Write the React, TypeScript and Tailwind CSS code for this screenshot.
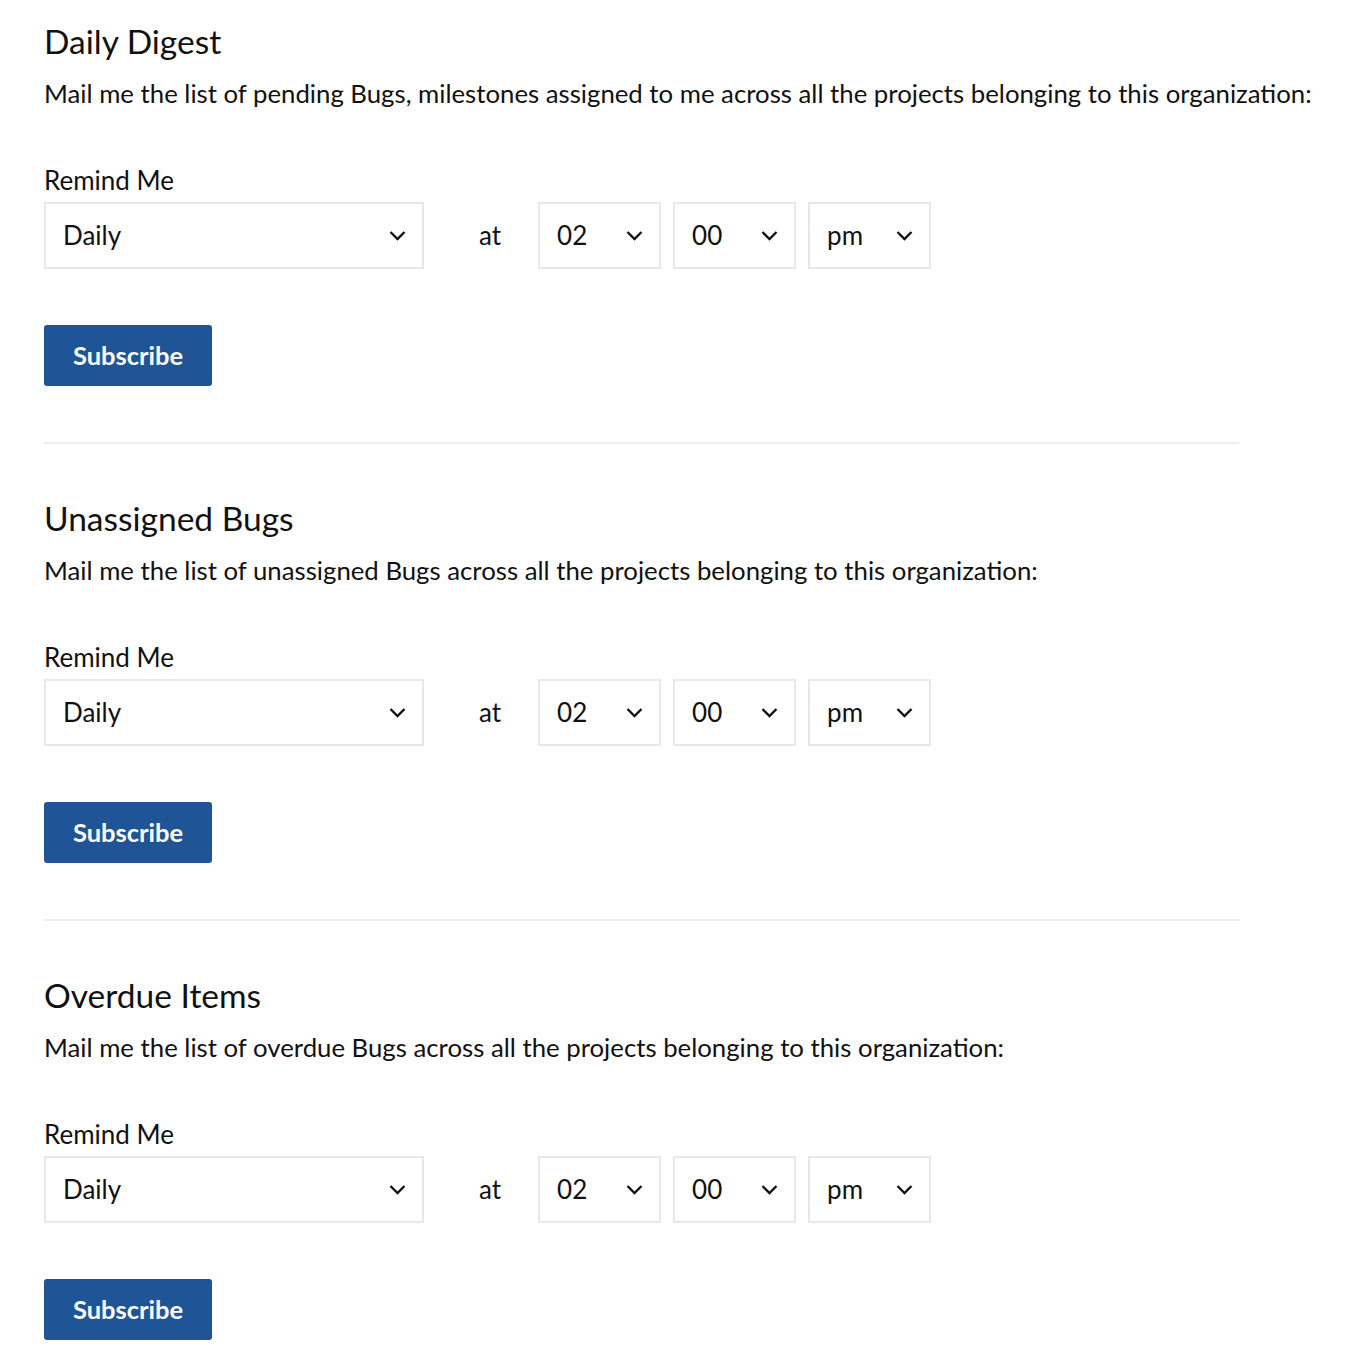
const sections = [
  {
    title: "Daily Digest",
    text: "Mail me the list of pending Bugs, milestones assigned to me across all the projects belonging to this organization:",
  },
  {
    title: "Unassigned Bugs",
    text: "Mail me the list of unassigned Bugs across all the projects belonging to this organization:",
  },
  {
    title: "Overdue Items",
    text: "Mail me the list of overdue Bugs across all the projects belonging to this organization:",
  },
];

function Chevron() {
  return (
    <svg width="17" height="11" viewBox="0 0 17 11" className="shrink-0">
      <polyline points="1.5,2 8.5,9 15.5,2" fill="none" stroke="#111" strokeWidth="2.3" />
    </svg>
  );
}

function Select({ value, width }: { value: string; width: string }) {
  return (
    <div
      className={`${width} h-[67px] border-2 border-[#e8e8e8] bg-white flex items-center justify-between pl-[17px] pr-[16px] text-[26px] text-[#111]`}
    >
      <span>{value}</span>
      <Chevron />
    </div>
  );
}

export default function App() {
  return (
    <div className="bg-white min-h-[1366px] px-[44px] pt-[22px]" style={{ fontFamily: "Lato, 'Noto Sans', sans-serif" }}>
      {sections.map((s, i) => (
        <section key={s.title}>
          <h2 className="text-[33.5px] leading-[38px] text-[#111]">{s.title}</h2>
          <p className="mt-[19px] text-[25.75px] leading-[29px] text-[#111] whitespace-nowrap">{s.text}</p>
          <div className="mt-[58px] text-[26px] leading-[29px] text-[#111]">Remind Me</div>
          <div className="mt-[7px] flex items-center">
            <Select value="Daily" width="w-[380px]" />
            <span className="ml-[55px] mr-[37px] text-[26px] text-[#111]">at</span>
            <div className="flex gap-[12px]">
              <Select value="02" width="w-[123px]" />
              <Select value="00" width="w-[123px]" />
              <Select value="pm" width="w-[123px]" />
            </div>
          </div>
          <button className="mt-[56px] w-[168px] h-[61px] rounded-[3px] bg-[#1f5597] text-white text-[25.5px] font-bold">
            Subscribe
          </button>
          {i < sections.length - 1 && (
            <div className="mt-[56px] mb-[55px] w-[1195px] h-[2px] bg-[#ececec]" />
          )}
        </section>
      ))}
    </div>
  );
}
